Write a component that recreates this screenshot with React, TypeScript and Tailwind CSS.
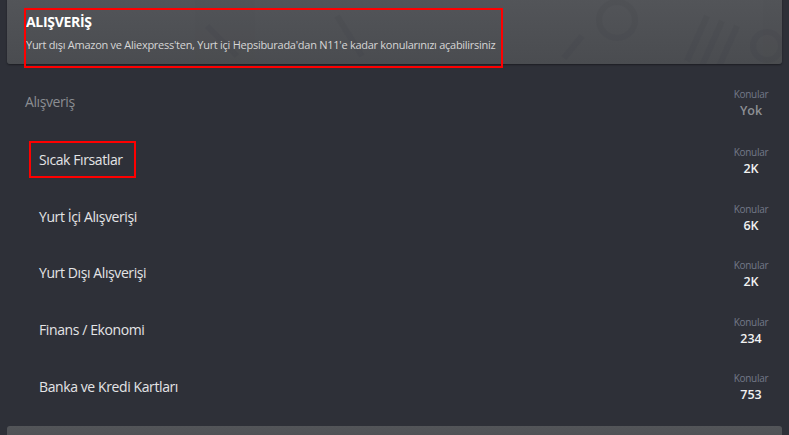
import React from "react";

const font = { fontFamily: '"Segoe UI", "Open Sans", "Noto Sans", sans-serif' };

const forums = [
  { name: "Sıcak Fırsatlar", count: "2K", marked: true },
  { name: "Yurt İçi Alışverişi", count: "6K" },
  { name: "Yurt Dışı Alışverişi", count: "2K" },
  { name: "Finans / Ekonomi", count: "234" },
  { name: "Banka ve Kredi Kartları", count: "753" },
];

function Stat({ value, dim }: { value: string; dim?: boolean }) {
  return (
    <div className="flex w-[40px] flex-col items-center leading-none">
      <span className="text-[10px] tracking-[-0.3px] text-[#737888]">Konular</span>
      <span className={`mt-[6px] text-[12.5px] font-semibold ${dim ? "text-[#8d8f94]" : "text-[#f1f1f1]"}`}>
        {value}
      </span>
    </div>
  );
}

export default function App() {
  return (
    <div className="h-[435px] w-[789px] overflow-hidden bg-[#2e3038]" style={font}>
      {/* category header */}
      <div className="relative mx-[7px] mt-[-4px]">
        <div className="relative h-[68px] overflow-hidden rounded-[3px] bg-gradient-to-b from-[#535559] to-[#4a4c50] shadow-[0_1px_2px_rgba(0,0,0,0.4)]">
          {/* faint watermark */}
          <svg className="absolute inset-0 h-full w-full opacity-[0.05]" viewBox="0 0 775 68" fill="none" stroke="#1e2230" strokeWidth="6">
            <circle cx="610" cy="24" r="18" />
            <path d="M575 40 l-18 22 M700 20 l-20 45 M715 25 l-20 45 M730 30 l-20 45" />
            <circle cx="760" cy="50" r="14" />
            <path d="M200 30 l30 30 M330 20 l25 40" />
          </svg>
          <div className="relative pl-[19px] pt-[18px]">
            <div className="text-[14px] font-bold leading-[16px] tracking-[-0.3px] text-white">ALIŞVERİŞ</div>
            <div className="mt-[8px] whitespace-nowrap text-[11px] leading-[14px] tracking-[-0.27px] text-[#d6d6d6]">
              Yurt dışı Amazon ve Aliexpress&apos;ten, Yurt içi Hepsiburada&apos;dan N11&apos;e kadar konularınızı açabilirsiniz
            </div>
          </div>
        </div>
        <div className="absolute left-[17px] top-[12px] h-[60px] w-[479px] border-2 border-[#ff0000]" />
      </div>

      {/* sub category */}
      <div className="flex h-[69px] items-center justify-between pl-[25px] pr-[18px] pt-[10px]">
        <span className="mb-[4px] text-[14px] tracking-[-0.4px] text-[#8b8d92]">Alışveriş</span>
        <Stat value="Yok" dim />
      </div>

      {forums.map((f) => (
        <div key={f.name} className="flex h-[56.6px] items-center justify-between pl-[39px] pr-[18px]">
          <span className="relative mb-[3px] text-[14px] tracking-[-0.4px] text-[#e4e4e6]">
            {f.name}
            {f.marked && (
              <span className="absolute left-[-10px] top-[-8px] h-[37px] w-[107px] border-2 border-[#ff0000]" />
            )}
          </span>
          <Stat value={f.count} />
        </div>
      ))}

      <div className="mx-[7px] mt-[10px] h-[20px] rounded-[3px] bg-gradient-to-b from-[#535559] to-[#4a4c50]" />
    </div>
  );
}
